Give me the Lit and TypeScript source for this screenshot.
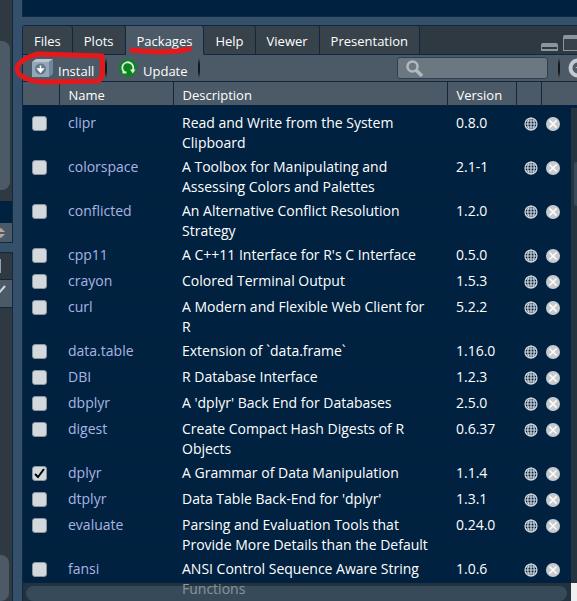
import { LitElement, html, css, svg } from "lit";
import { customElement } from "lit/decorators.js";

interface Pkg { name: string; desc: string; version: string; loaded?: boolean; }

const PACKAGES: Pkg[] = [
  { name: "clipr", desc: "Read and Write from the System Clipboard", version: "0.8.0" },
  { name: "colorspace", desc: "A Toolbox for Manipulating and Assessing Colors and Palettes", version: "2.1-1" },
  { name: "conflicted", desc: "An Alternative Conflict Resolution Strategy", version: "1.2.0" },
  { name: "cpp11", desc: "A C++11 Interface for R's C Interface", version: "0.5.0" },
  { name: "crayon", desc: "Colored Terminal Output", version: "1.5.3" },
  { name: "curl", desc: "A Modern and Flexible Web Client for R", version: "5.2.2" },
  { name: "data.table", desc: "Extension of `data.frame`", version: "1.16.0" },
  { name: "DBI", desc: "R Database Interface", version: "1.2.3" },
  { name: "dbplyr", desc: "A 'dplyr' Back End for Databases", version: "2.5.0" },
  { name: "digest", desc: "Create Compact Hash Digests of R Objects", version: "0.6.37" },
  { name: "dplyr", desc: "A Grammar of Data Manipulation", version: "1.1.4", loaded: true },
  { name: "dtplyr", desc: "Data Table Back-End for 'dplyr'", version: "1.3.1" },
  { name: "evaluate", desc: "Parsing and Evaluation Tools that Provide More Details than the Default", version: "0.24.0" },
  { name: "fansi", desc: "ANSI Control Sequence Aware String Functions", version: "1.0.6" },
];

const TABS = ["Files", "Plots", "Packages", "Help", "Viewer", "Presentation"];

const globe = svg`<svg width="14" height="14" viewBox="0 0 14 14" fill="none" stroke="#d3d8dc" stroke-width="1.2">
  <circle cx="7" cy="7" r="6"/><ellipse cx="7" cy="7" rx="3.2" ry="6"/>
  <path d="M7 1v12M1 7h12M2 4h10M2 10h10"/></svg>`;
const cross = svg`<svg width="14" height="14" viewBox="0 0 14 14">
  <circle cx="7" cy="7" r="7" fill="#c6cbd0"/>
  <path d="M3.5 3.5l7 7M10.5 3.5l-7 7" stroke="#fff" stroke-width="1.6"/></svg>`;

@customElement("app-root")
export class AppRoot extends LitElement {
  static styles = css`
    :host {
      display: flex; height: 100vh; overflow: hidden; background: #34506a;
      font: 14px/20px "Open Sans", "Noto Sans", sans-serif; color: #fff;
    }
    * { box-sizing: border-box; }
    svg { display: block; flex: none; }
    button { font: inherit; color: inherit; background: none; border: 0; padding: 0; }
    .rail { width: 13px; flex: none; display: flex; flex-direction: column; border-right: 1px solid #10273d; background: #2e3941; }
    .rail div { flex: none; }
    .r-gap { height: 41px; }
    .thumb { width: 10px; background: #4b5a66; border-radius: 0 8px 8px 0; }
    .t1 { height: 149px; }
    .r-gap2 { height: 11px; }
    .r-edit { height: 22px; background: #002240; }
    .r-bar { height: 20px; background: #4b5a66; border-bottom: 1px solid #10273d; display: flex; align-items: center; }
    .r-split { height: 9px; background: #34506a; margin-right: -1px; }
    .r-tab { height: 28px; border: 1px solid #10273d; border-width: 1px 0; border-radius: 0 3px 0 0; display: flex; align-items: center; }
    .r-tool { height: 28px; background: #4b5a66; border-bottom: 1px solid #10273d; display: flex; align-items: flex-start; padding-top: 4px; }
    .rail .r-rest { flex: 1; }
    .t2 { height: 46px; width: 9px; }
    .main { flex: 1; min-width: 0; margin-left: 9px; display: flex; flex-direction: column; }
    .above { height: 17px; flex: none; background: #002240; border: 1px solid #10273d; border-width: 0 0 1px 1px; }
    .pane { flex: 1; min-height: 0; margin-top: 8px; border: 1px solid #10273d; border-width: 1px 0 0 1px; border-radius: 3px 0 0 0; background: #4b5a66; display: flex; flex-direction: column; position: relative; }
    .tabs { height: 29px; flex: none; display: flex; background: #2e3941; border-radius: 3px 0 0 0; font-size: 13px; }
    .tab { padding: 2px 11px 0; background: #37424b; border: 1px solid #10273d; border-width: 0 1px 1px 0; border-radius: 0 3px 0 0; white-space: nowrap; }
    .tab.on { background: #4b5a66; border-bottom-color: #4b5a66; }
    .win { flex: 1; display: flex; justify-content: flex-end; gap: 5px; border-bottom: 1px solid #10273d; overflow: hidden; align-items: flex-end; padding-bottom: 3px; }
    .tools { height: 27px; flex: none; display: flex; align-items: center; border-bottom: 1px solid #10273d; overflow: hidden; font-size: 13px; }
    .tool { display: flex; align-items: center; gap: 5px; white-space: nowrap; }
    .tool span { padding-top: 5px; }
    .inst { padding-left: 9px; width: 82px; }
    .upd { padding-left: 12px; width: 91px; gap: 6px; }
    .sep { width: 2px; height: 20px; flex: none; background: linear-gradient(transparent, #14181c 30%, #14181c 70%, transparent); }
    .search { margin-left: auto; width: 151px; height: 22px; display: flex; align-items: center; padding-left: 8px; background: #6b7882; border: 1px solid #2c3e50; border-radius: 3px; }
    .search input { flex: 1; min-width: 0; border: 0; background: none; outline: 0; font: inherit; color: #fff; }
    .sep.right { margin: 0 8px 0 10px; }
    .refresh { width: 9px; overflow: hidden; }
    .list { flex: 1; min-height: 0; position: relative; overflow: hidden; background: #002240; }
    table { width: 100%; table-layout: fixed; border-collapse: collapse; }
    th { height: 23px; background: #4b5a66; text-align: left; font-size: 13px; font-weight: 400; padding: 3px 9px 0; border-right: 1px solid #10273d; }
    th:last-child { border-right: 0; }
    .c1 { width: 36px; } .c2 { width: 114px; } .c3 { width: auto; }
    .c4 { width: 69px; } .c5 { width: 25px; } .c6 { width: 36px; }
    td { vertical-align: top; padding: 2px 0 1px 9px; height: 26px; border-top: 1px solid #06203a; }
    td.desc { padding-right: 14px; }
    tbody tr:first-child td { padding-top: 7px; }
    td.name { color: #aab4e2; }
    td.name a { color: inherit; text-decoration: none; }
    td button { display: block; margin-top: 4px; }
    td.ico { padding-left: 8px; }
    td.del { padding-left: 5px; }
    td input { appearance: none; display: block; margin: 3px 0 0; width: 15px; height: 15px; background: #d3d8dc; border: 1px solid #8b959e; border-radius: 3px; }
    td input:checked { background: #d3d8dc url('data:image/svg+xml,<svg xmlns="http://www.w3.org/2000/svg" viewBox="0 0 13 13"><path d="M2 7l3 3 6-8" fill="none" stroke="black" stroke-width="2"/></svg>'); }
    .vbar { position: absolute; right: 0; top: 26px; bottom: 0; width: 6px; background: #26343f; }
    .vbar i { position: absolute; top: 54px; left: 3px; right: 0; height: 44px; background: #3a4b5b; border-radius: 6px 0 0 6px; }
    .hbar { position: absolute; left: 0; right: 6px; bottom: 0; height: 18px; background: rgba(62, 65, 62, .55); padding: 3px 4px 0 3px; }
    .hbar i { display: block; height: 15px; border-radius: 8px; background: rgba(107, 128, 153, .3); }
    .corner { position: absolute; right: 0; bottom: 0; width: 6px; height: 18px; background: #f0f0f0; }
    .marks { position: absolute; left: -9px; top: 14px; pointer-events: none; }
  `;

  render() {
    return html`
      <aside class="rail">
        <div class="r-gap"></div><div class="thumb t1"></div><div class="r-gap2"></div>
        <div class="r-edit"></div>
        <div class="r-bar"><svg width="6" height="12" viewBox="0 0 6 12"><path d="M-4 5L1 1L5 5z" fill="#b3a79f"/><path d="M-4 7L1 11L5 7z" fill="#b3a79f"/></svg></div>
        <div class="r-split"></div>
        <div class="r-tab"><svg width="2" height="16"><path d="M.5 1v14" stroke="#98a2aa"/></svg></div>
        <div class="r-tool"><svg width="7" height="12" viewBox="0 0 7 12"><path d="M-1 9L5 2" stroke="#d3d8dc" stroke-width="2"/></svg></div>
        <div class="r-rest"></div><div class="thumb t2"></div>
      </aside>
      <main class="main">
        <div class="above"></div>
        <section class="pane">
          <nav class="tabs">
            ${TABS.map((t) => html`<button class="tab ${t === "Packages" ? "on" : ""}">${t}</button>`)}
            <div class="win">
              <button aria-label="Minimize"><svg width="17" height="8" viewBox="0 0 17 8"><path d="M0 2q0-2 2-2h13q2 0 2 2v6H0z" fill="#8b959c"/><path d="M1 4h15v2H1z" fill="#2e3941"/></svg></button>
              <button aria-label="Maximize"><svg width="14" height="16" viewBox="0 0 14 16"><path d="M0 2q0-2 2-2h12v16H0z" fill="#8b959c"/><path d="M1 4h13v11H1z" fill="#37424b"/></svg></button>
            </div>
          </nav>
          <div class="tools">
            <button class="tool inst">
              <svg width="21" height="20" viewBox="0 0 21 20"><path d="M0 4L4 1h17l-4 3z" fill="#b9c5d0"/><path d="M17 4l4-3v15l-4 3z" fill="#71869a"/><path d="M0 4h17v15H0z" fill="#93a7b8"/><circle cx="8.5" cy="11" r="5.5" fill="#66798a"/><path d="M8.5 7.5v5M6 11l2.500 3 2.500-3z" stroke="#fff" stroke-width="1.5" fill="#fff"/></svg>
              <span>Install</span></button>
            <i class="sep"></i>
            <button class="tool upd">
              <svg width="18" height="18" viewBox="0 0 18 18"><circle cx="9" cy="9" r="9" fill="#0b8420"/><path d="M6 13.500A5.500 5.500 0 1 1 13.800 11" fill="none" stroke="#d8eddb" stroke-width="1.8"/><path d="M11 10.500h5.500l-2.700 4z" fill="#d8eddb"/><path d="M3.500 12.500h4v2h-4z" fill="#d8eddb"/></svg>
              <span>Update</span></button>
            <i class="sep"></i>
            <label class="search"><svg width="17" height="17" viewBox="0 0 17 17" fill="none" stroke="#b1b9bf"><circle cx="6.5" cy="6.5" r="5" stroke-width="2.5"/><path d="M10 10l6 6" stroke-width="3.5"/></svg><input aria-label="Search packages" /></label>
            <i class="sep right"></i>
            <button class="refresh" aria-label="Refresh"><svg width="20" height="20" viewBox="0 0 20 20"><circle cx="10" cy="10" r="7.5" fill="none" stroke="#c3c9ce" stroke-width="4"/><path d="M7 9h6v4z" fill="#c3c9ce"/></svg></button>
          </div>
          <div class="list">
            <table>
              <thead><tr><th class="c1"></th><th class="c2">Name</th><th class="c3">Description</th><th class="c4">Version</th><th class="c5"></th><th class="c6"></th></tr></thead>
              <tbody>${PACKAGES.map((p) => html`<tr>
                <td><input type="checkbox" aria-label=${p.name} ?checked=${p.loaded} /></td>
                <td class="name"><a href="#${p.name}">${p.name}</a></td>
                <td class="desc">${p.desc}</td><td>${p.version}</td>
                <td class="ico"><button aria-label="Browse ${p.name}">${globe}</button></td>
                <td class="del"><button aria-label="Remove ${p.name}">${cross}</button></td>
              </tr>`)}</tbody>
            </table>
            <div class="vbar"><i></i></div><div class="hbar"><i></i></div><div class="corner"></div>
          </div>
          <svg class="marks" width="190" height="50" viewBox="14 40 190 50" fill="none" stroke="#e5191c" stroke-linecap="round" stroke-linejoin="round" stroke-width="5">
            <path d="M102 56L38 54C29 56 17 62 17 69C17 77 32 82 45 82L98 81C104 79 102 66 102 56"/>
            <path d="M132 50C146 52 174 53 189 49"/>
          </svg>
        </section>
      </main>`;
  }
}
